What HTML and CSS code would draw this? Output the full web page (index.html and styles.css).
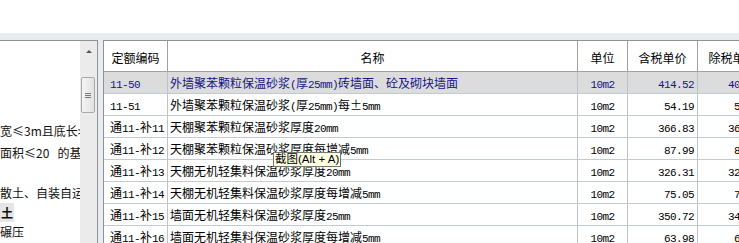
FILE: index.html
```html
<!DOCTYPE html>
<html lang="zh-CN">
<head>
<meta charset="utf-8">
<title>定额</title>
<link rel="stylesheet" href="styles.css">
</head>
<body>
<div class="topbar"></div>
<div class="main">
  <div class="left">
    <div class="left-content">
      <div class="ln l1">宽≤3m且底长&gt;7m</div>
      <div class="ln l2">面积≤20&nbsp;&nbsp;&nbsp;的基础</div>
      <div class="ln l3">散土、自装自运</div>
      <div class="ln l4"><span class="hl">土</span></div>
      <div class="ln l5">碾压</div>
    </div>
    <div class="vscroll">
      <div class="arrow-up"></div>
      <div class="thumb"><span class="grip"></span></div>
    </div>
  </div>
  <div class="right">
    <div class="grid">
      <div class="row head">
        <div class="c">定额编码</div>
        <div class="c">名称</div>
        <div class="c">单位</div>
        <div class="c">含税单价</div>
        <div class="c">除税单价</div>
      </div>
      <div class="row sel">
        <div class="c code"><span class="a">11-50</span></div>
        <div class="c name">外墙聚苯颗粒保温砂浆<span class="a">(</span>厚<span class="a">25mm)</span>砖墙面、砼及砌块墙面</div>
        <div class="c unit"><span class="a">10m2</span></div>
        <div class="c num"><span class="a">414.52</span></div>
        <div class="c num"><span class="a">408.30</span></div>
      </div>
      <div class="row">
        <div class="c code"><span class="a">11-51</span></div>
        <div class="c name">外墙聚苯颗粒保温砂浆<span class="a">(</span>厚<span class="a">25mm)</span>每±<span class="a">5mm</span></div>
        <div class="c unit"><span class="a">10m2</span></div>
        <div class="c num"><span class="a">54.19</span></div>
        <div class="c num"><span class="a">53.38</span></div>
      </div>
      <div class="row">
        <div class="c code">通<span class="a">11-</span>补<span class="a">11</span></div>
        <div class="c name">天棚聚苯颗粒保温砂浆厚度<span class="a">20mm</span></div>
        <div class="c unit"><span class="a">10m2</span></div>
        <div class="c num"><span class="a">366.83</span></div>
        <div class="c num"><span class="a">361.33</span></div>
      </div>
      <div class="row">
        <div class="c code">通<span class="a">11-</span>补<span class="a">12</span></div>
        <div class="c name">天棚聚苯颗粒保温砂浆厚度每增减<span class="a">5mm</span></div>
        <div class="c unit"><span class="a">10m2</span></div>
        <div class="c num"><span class="a">87.99</span></div>
        <div class="c num"><span class="a">86.67</span></div>
      </div>
      <div class="row">
        <div class="c code">通<span class="a">11-</span>补<span class="a">13</span></div>
        <div class="c name">天棚无机轻集料保温砂浆厚度<span class="a">20mm</span></div>
        <div class="c unit"><span class="a">10m2</span></div>
        <div class="c num"><span class="a">326.31</span></div>
        <div class="c num"><span class="a">321.42</span></div>
      </div>
      <div class="row">
        <div class="c code">通<span class="a">11-</span>补<span class="a">14</span></div>
        <div class="c name">天棚无机轻集料保温砂浆厚度每增减<span class="a">5mm</span></div>
        <div class="c unit"><span class="a">10m2</span></div>
        <div class="c num"><span class="a">75.05</span></div>
        <div class="c num"><span class="a">73.92</span></div>
      </div>
      <div class="row">
        <div class="c code">通<span class="a">11-</span>补<span class="a">15</span></div>
        <div class="c name">墙面无机轻集料保温砂浆厚度<span class="a">25mm</span></div>
        <div class="c unit"><span class="a">10m2</span></div>
        <div class="c num"><span class="a">350.72</span></div>
        <div class="c num"><span class="a">345.46</span></div>
      </div>
      <div class="row">
        <div class="c code">通<span class="a">11-</span>补<span class="a">16</span></div>
        <div class="c name">墙面无机轻集料保温砂浆厚度每增减<span class="a">5mm</span></div>
        <div class="c unit"><span class="a">10m2</span></div>
        <div class="c num"><span class="a">63.98</span></div>
        <div class="c num"><span class="a">63.02</span></div>
      </div>
    </div>
  </div>
</div>
<div class="tooltip">截图(Alt + A)</div>
</body>
</html>
```
FILE: styles.css
```css
html, body {
  margin: 0;
  padding: 0;
}
body {
  width: 739px;
  height: 243px;
  overflow: hidden;
  background: #ffffff;
  font-family: "Noto Sans CJK SC", sans-serif;
  font-size: 12px;
  color: #000;
  position: relative;
}
.topbar {
  height: 33px;
  background: #ffffff;
}
.main {
  display: flex;
  height: 210px;
  padding-top: 7px;
  box-sizing: border-box;
  background: #e9ecee;
}
.left {
  flex: none;
  width: 98px;
  box-sizing: border-box;
  display: flex;
  background: #ffffff;
  border-top: 1px solid #8e9296;
  border-right: 1px solid #8e9296;
}
.left-content {
  width: 80px;
  overflow: hidden;
  white-space: nowrap;
  font-size: 12px;
  padding-top: 79px;
  color: #111;
}
.ln {
  height: 20px;
  line-height: 20px;
}
.l1 { height: 22px; line-height: 22px; }
.l2 { height: 22px; line-height: 22px; }
.l3 { margin-top: 19px; }
.l4 { height: 19px; line-height: 19px; }
.hl {
  display: inline-block;
  background: #e6e6e6;
  font-weight: bold;
  padding: 0 1px;
}
.vscroll {
  width: 17px;
  flex: none;
  background: #ebebeb;
  position: relative;
}
.arrow-up {
  width: 0;
  height: 0;
  margin: 9px auto 0;
  border-left: 3px solid transparent;
  border-right: 3px solid transparent;
  border-bottom: 3px solid #555;
}
.thumb {
  position: absolute;
  left: 1px;
  top: 36px;
  width: 14px;
  height: 36px;
  box-sizing: border-box;
  border: 1px solid #a9a9a9;
  border-radius: 2px;
  background: linear-gradient(to right, #f4f4f4, #e2e2e2);
  display: flex;
  align-items: center;
  justify-content: center;
}
.grip {
  width: 6px;
  height: 5px;
  background: repeating-linear-gradient(to bottom, #777 0, #777 1px, transparent 1px, transparent 2px);
}
.right {
  flex: 1;
  min-width: 0;
  margin-left: 5px;
  background: #ffffff;
  border-top: 1px solid #8e9296;
  border-left: 1px solid #8e9296;
  overflow: hidden;
}
.grid {
  width: 664px;
}
.row {
  display: grid;
  grid-template-columns: 64px 410px 50px 70px 70px;
  height: 22px;
}
.c {
  box-sizing: border-box;
  border-right: 1px solid #bcc3cc;
  border-bottom: 1px solid #c4cad2;
  line-height: 21px;
  white-space: nowrap;
  overflow: hidden;
}
.row.head {
  height: 31px;
}
.head .c {
  text-align: center;
  line-height: 33px;
  border-right-color: #a0a0a0;
  border-bottom-color: #a0a0a0;
  font-size: 12px;
}
.row.sel {
  background: #dcdcdc;
  color: #14148a;
}
.code {
  padding-left: 6px;
}
.name {
  padding-left: 2px;
}
.unit {
  text-align: center;
}
.num {
  text-align: right;
  padding-right: 3px;
}
.a {
  font-family: "Liberation Mono", monospace;
  font-size: 11px;
  letter-spacing: -0.6px;
}
.tooltip {
  position: absolute;
  left: 273px;
  top: 152px;
  width: 68px;
  height: 15px;
  box-sizing: border-box;
  background: #ffffe1;
  border: 1px solid #767676;
  font-family: "Liberation Sans", "Noto Sans CJK SC", sans-serif;
  font-size: 11.5px;
  line-height: 13px;
  padding: 0 0 0 1px;
  white-space: nowrap;
  overflow: hidden;
}
```
